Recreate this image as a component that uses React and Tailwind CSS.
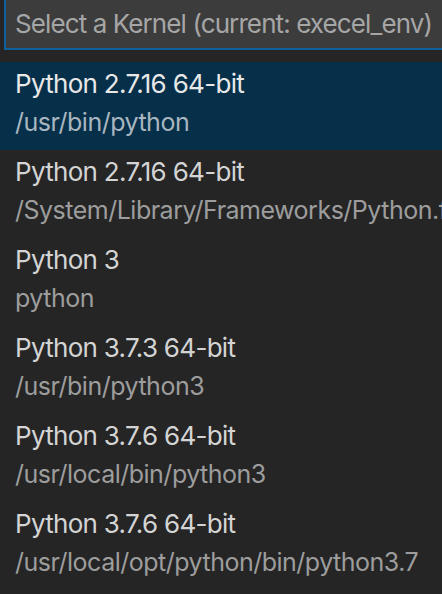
const kernels = [
  { name: 'Python 2.7.16 64-bit', path: '/usr/bin/python' },
  { name: 'Python 2.7.16 64-bit', path: '/System/Library/Frameworks/Python.framework/Versions/2.7/bin/python' },
  { name: 'Python 3', path: 'python' },
  { name: 'Python 3.7.3 64-bit', path: '/usr/bin/python3' },
  { name: 'Python 3.7.6 64-bit', path: '/usr/local/bin/python3' },
  { name: 'Python 3.7.6 64-bit', path: '/usr/local/opt/python/bin/python3.7' },
];

export default function App() {
  return (
    <div className="h-[594px] w-[442px] overflow-hidden bg-[#252526] font-['Inter',sans-serif] text-[26px] tracking-[-0.7px]">
      {/* Input */}
      <div className="ml-[4px] h-[50px] border-l-2 border-b-2 border-[#0e639c] bg-[#3c3c3c] pl-[9px] leading-[48px] tracking-[-0.9px] text-[#a6a6a6] whitespace-nowrap overflow-hidden">
        Select a Kernel (current: execel_env)
      </div>

      {/* List */}
      <div className="mt-[12px]">
        {kernels.map((k, i) => (
          <div
            key={i}
            className={`h-[88px] pt-[3px] pl-[15px] whitespace-nowrap overflow-hidden leading-[38px] ${i === 0 ? 'bg-[#062f4a]' : ''}`}
          >
            <div className={i === 0 ? 'text-[#e8e8e8]' : 'text-[#d4d4d4]'}>{k.name}</div>
            <div className={`text-[25px] tracking-[-0.5px] ${i === 0 ? 'text-[#a9b6bf]' : 'text-[#9d9d9d]'}`}>{k.path}</div>
          </div>
        ))}
      </div>
    </div>
  );
}
